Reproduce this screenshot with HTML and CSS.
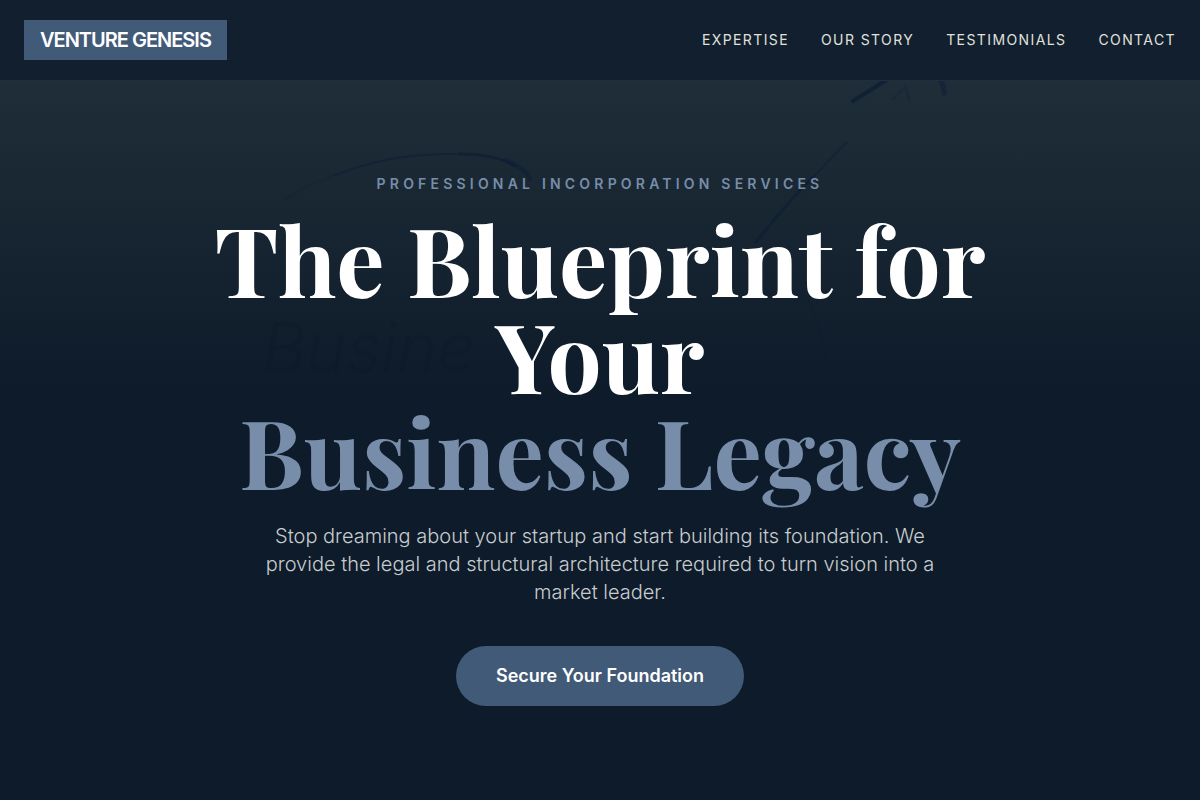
FILE: index.html
```
<!DOCTYPE html>
<html lang="en">
<head>
  <meta charset="UTF-8">
  <meta name="viewport" content="width=device-width, initial-scale=1.0">
  <title>Venture Genesis</title>
  <link rel="stylesheet" href="styles.css">
</head>
<body>
  <header class="navbar">
    <a href="#" class="logo">VENTURE GENESIS</a>
    <nav class="nav-links">
      <a href="#expertise">Expertise</a>
      <a href="#story">Our Story</a>
      <a href="#testimonials">Testimonials</a>
      <a href="#contact">Contact</a>
    </nav>
  </header>

  <section class="hero">
    <!-- Whiteboard sketch behind the headline -->
    <svg class="hero-sketch" viewBox="0 0 1200 800" preserveAspectRatio="xMidYMin slice" aria-hidden="true">
      <g fill="none" stroke="#0b1c33" stroke-linecap="round">
        <path d="M285 200C300 189 316 182 335 175" stroke-width="2" opacity="0.15"/>
        <path d="M335 175C375 160 410 153 460 154" stroke-width="2" opacity="0.5"/>
        <path d="M460 154C485 154 505 159 515 166" stroke-width="3" opacity="0.6"/>
        <path d="M505 160C518 165 527 171 530 179" stroke-width="4" opacity="0.5"/>
        <path d="M847 142L812 178" stroke-width="2" opacity="0.4"/>
        <path d="M812 178C790 200 772 222 756 242" stroke-width="3" opacity="0.6"/>
        <path d="M853 101C866 93 877 86 888 79" stroke-width="4" opacity="0.7"/>
        <path d="M940 79Q944 85 944 93" stroke-width="5" opacity="0.5"/>
        <path d="M893 99L905 87L909 99" stroke-width="3" opacity="0.25"/>
        <path d="M808 300Q824 330 825 360" stroke-width="2" opacity="0.2"/>
      </g>
      <text class="sketch-word" x="262" y="372">Busine</text>
    </svg>

    <div class="hero-content">
      <p class="tagline">Professional Incorporation Services</p>
      <h1 class="title">The Blueprint for Your <span class="accent">Business Legacy</span></h1>
      <p class="description">Stop dreaming about your startup and start building its foundation. We provide the legal and structural architecture required to turn vision into a market leader.</p>
      <a href="#contact" class="cta">Secure Your Foundation</a>
    </div>
  </section>
</body>
</html>
```
FILE: styles.css
```
* {
  box-sizing: border-box;
  margin: 0;
  padding: 0;
}
body {
  font-family: Inter, sans-serif;
  background-color: #0d1b2a;
  color: #e0e1dd;
}
a {
  text-decoration: none;
}
.navbar {
  position: fixed;
  top: 0;
  left: 0;
  right: 0;
  z-index: 10;
  display: flex;
  justify-content: space-between;
  align-items: center;
  padding: 20px 24px;
  background-color: #111f2e;
  border-bottom: 1px solid #202f40;
}
.logo {
  padding: 6px 16px;
  background-color: #415a77;
  color: white;
  font-size: 20px;
  font-weight: 600;
  line-height: 28px;
  letter-spacing: -1px;
}
.nav-links {
  display: flex;
  gap: 32px;
}
.nav-links a {
  color: #e0e1dd;
  font-size: 14px;
  line-height: 20px;
  letter-spacing: 0.1em;
  text-transform: uppercase;
}
.hero {
  position: relative;
  display: flex;
  justify-content: center;
  align-items: center;
  min-height: 100vh;
  padding: 80px 24px 0;
  background: linear-gradient(#22323e, #1f2d39 90px, #192733 200px, #13202e 300px, #0d1b2a 400px);
}
.hero-sketch {
  position: absolute;
  inset: 0;
  width: 100%;
  height: 100%;
}
.sketch-word {
  fill: #0b1826;
  font-size: 68px;
  font-style: italic;
  font-weight: 300;
  opacity: 0.3;
}
.hero-content {
  position: relative;
  max-width: 896px;
  text-align: center;
}
.tagline {
  margin-bottom: 16px;
  color: #778da9;
  font-size: 14px;
  font-weight: 600;
  line-height: 20px;
  letter-spacing: 0.3em;
  text-transform: uppercase;
}
.title {
  margin-bottom: 24px;
  color: white;
  font-family: 'Playfair Display', 'Liberation Serif', serif;
  font-size: 96px;
  font-weight: 700;
  line-height: 96px;
}
.accent {
  display: block;
  color: #778da9;
}
.description {
  max-width: 672px;
  margin: 0 auto 40px;
  color: #c8ccce;
  font-size: 20px;
  font-weight: 300;
  line-height: 28px;
}
.cta {
  display: inline-block;
  padding: 16px 40px;
  border-radius: 30px;
  background-color: #415a77;
  color: white;
  font-size: 18px;
  font-weight: 600;
  line-height: 28px;
}
```
